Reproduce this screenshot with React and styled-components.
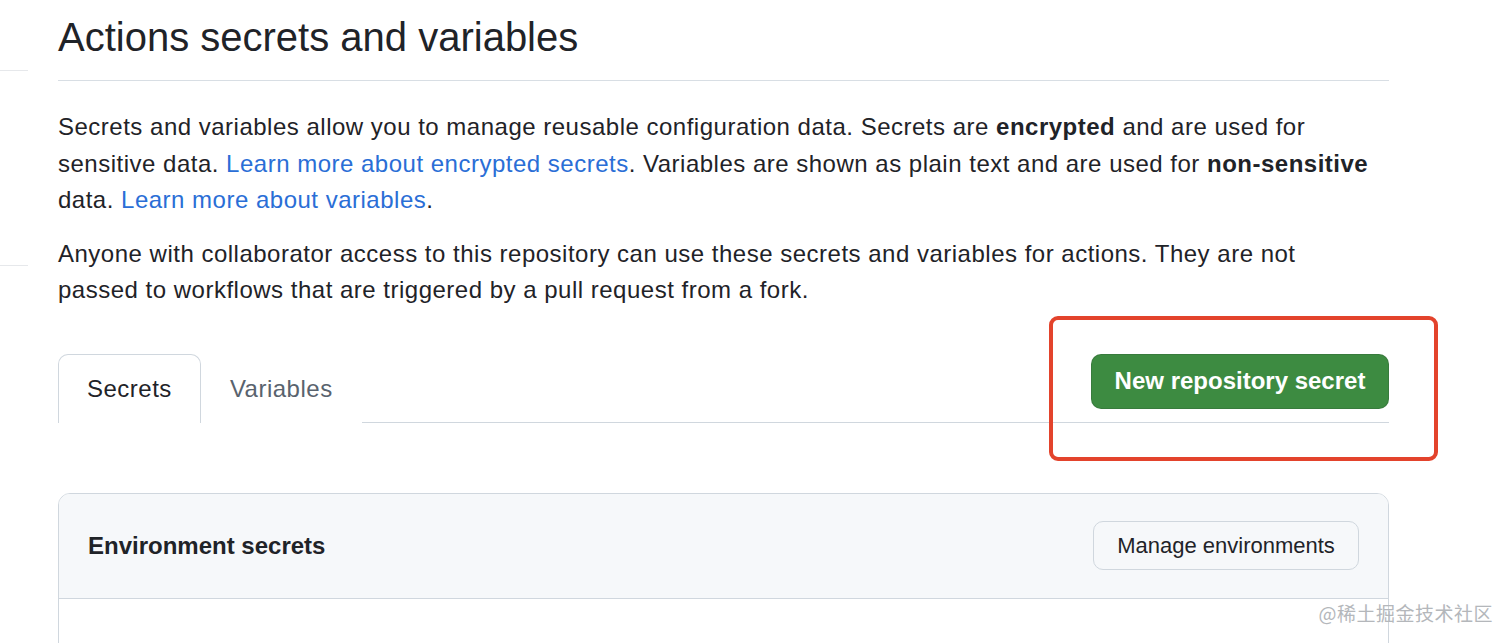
import React from "react";
import styled, { createGlobalStyle } from "styled-components";

const GlobalStyle = createGlobalStyle`
  html, body {
    margin: 0;
    padding: 0;
    background: #ffffff;
    overflow: hidden;
  }
  body {
    font-family: "Liberation Sans", Arial, sans-serif;
    color: #1f2328;
    -webkit-font-smoothing: antialiased;
  }
`;

const Page = styled.div`
  position: relative;
  display: flex;
  width: 1512px;
  height: 643px;
  overflow: hidden;
`;

const Sidebar = styled.div`
  width: 28px;
  display: flex;
  flex-direction: column;
  padding-top: 70px;
`;

const SideRule = styled.div`
  height: 1px;
  background: #e6e8eb;
  margin-bottom: ${props => props.gap || 0}px;
`;

const Content = styled.main`
  width: 1331px;
  margin-left: 30px;
  padding-top: 12px;
`;

const Title = styled.h2`
  margin: 0;
  font-size: 40px;
  line-height: 50px;
  font-weight: 400;
  padding-bottom: 18px;
  border-bottom: 1px solid #d8dee4;
`;

const Paragraph = styled.p`
  margin: ${props => props.top}px 0 0;
  max-width: 1315px;
  font-size: 24px;
  line-height: 36.6px;
  letter-spacing: 0.5px;
`;

const Link = styled.a`
  color: #2a6ed6;
  text-decoration: none;
`;

const TabRow = styled.div`
  position: relative;
  margin-top: 45px;
  display: flex;
  justify-content: space-between;
  align-items: flex-start;
  border-bottom: 1px solid #d0d7de;
`;

const Tabs = styled.nav`
  display: flex;
`;

const Tab = styled.div`
  height: 69px;
  box-sizing: border-box;
  padding: 0 28px;
  display: flex;
  align-items: center;
  font-size: 24px;
  letter-spacing: 0.5px;
  color: ${props => (props.active ? "#1f2328" : "#59636e")};
  background: #ffffff;
  border: 1px solid ${props => (props.active ? "#d0d7de" : "transparent")};
  border-bottom: none;
  border-radius: 10px 10px 0 0;
  margin-bottom: -1px;
`;

const PrimaryButton = styled.button`
  height: 55px;
  width: 298px;
  padding: 0 22px;
  border: 1px solid rgba(31, 35, 40, 0.15);
  border-radius: 10px;
  background: #3d8b41;
  color: #ffffff;
  font-family: inherit;
  font-size: 24px;
  font-weight: 700;
  cursor: pointer;
`;

const Annotation = styled.div`
  position: absolute;
  left: 991px;
  top: -38px;
  width: 389px;
  height: 145px;
  box-sizing: border-box;
  border: 4px solid #e3432c;
  border-radius: 9px;
  pointer-events: none;
`;

const Box = styled.section`
  margin-top: 70px;
  border: 1px solid #d0d7de;
  border-radius: 12px;
  overflow: hidden;
`;

const BoxHeader = styled.div`
  height: 104px;
  padding: 0 29px;
  display: flex;
  align-items: center;
  justify-content: space-between;
  background: #f6f8fa;
  border-bottom: 1px solid #d0d7de;
`;

const BoxTitle = styled.h3`
  margin: 0;
  font-size: 24px;
  font-weight: 700;
`;

const SecondaryButton = styled.button`
  height: 49px;
  width: 266px;
  border: 1px solid #d0d7de;
  border-radius: 10px;
  background: #f6f8fa;
  color: #1f2328;
  font-family: inherit;
  font-size: 22px;
  font-weight: 500;
  cursor: pointer;
`;

const BoxBody = styled.div`
  height: 80px;
  background: #ffffff;
`;

const Watermark = styled.div`
  position: absolute;
  right: 19px;
  top: 599px;
  font-family: "Noto Sans CJK SC", sans-serif;
  font-size: 19px;
  color: #b4b7bb;
  letter-spacing: 0.5px;
`;

export default function App() {
  return (
    <>
      <GlobalStyle />
      <Page>
        <Sidebar>
          <SideRule gap={194} />
          <SideRule />
        </Sidebar>
        <Content>
          <Title>Actions secrets and variables</Title>
          <Paragraph top={28}>
            Secrets and variables allow you to manage reusable configuration data. Secrets are{" "}
            <strong>encrypted</strong> and are used for sensitive data.{" "}
            <Link href="#">Learn more about encrypted secrets</Link>. Variables are shown as plain
            text and are used for <strong>non-sensitive</strong> data.{" "}
            <Link href="#">Learn more about variables</Link>.
          </Paragraph>
          <Paragraph top={17}>
            Anyone with collaborator access to this repository can use these secrets and variables
            for actions. They are not passed to workflows that are triggered by a pull request from a
            fork.
          </Paragraph>
          <TabRow>
            <Tabs>
              <Tab active>Secrets</Tab>
              <Tab>Variables</Tab>
            </Tabs>
            <PrimaryButton>New repository secret</PrimaryButton>
            <Annotation />
          </TabRow>
          <Box>
            <BoxHeader>
              <BoxTitle>Environment secrets</BoxTitle>
              <SecondaryButton>Manage environments</SecondaryButton>
            </BoxHeader>
            <BoxBody />
          </Box>
        </Content>
        <Watermark>@稀土掘金技术社区</Watermark>
      </Page>
    </>
  );
}
